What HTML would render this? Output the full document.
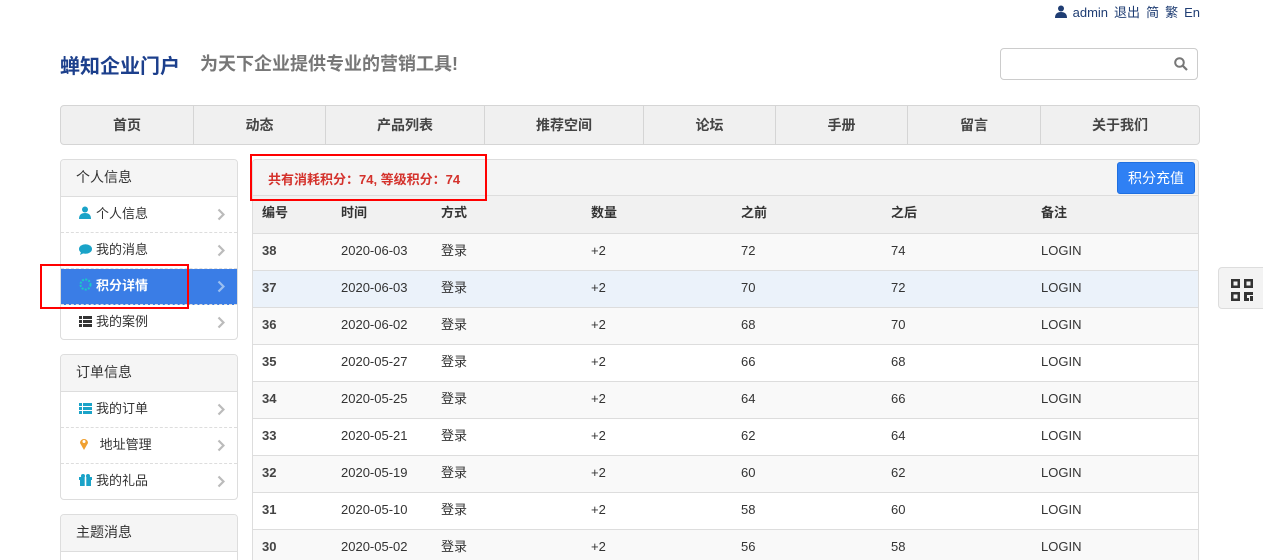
<!DOCTYPE html>
<html><head><meta charset="utf-8"><style>
*{margin:0;padding:0;box-sizing:border-box}
html,body{width:1263px;height:560px;overflow:hidden}
body{background:#fff;font-family:"Liberation Sans","Noto Sans CJK SC",sans-serif;font-size:13px;color:#333;position:relative}
.abs{position:absolute}
.top{right:63px;top:5px;color:#1f3d73;font-size:13px;line-height:16px}
.top span{margin-left:6px}
.logo{left:60px;top:50px;font-size:20px;font-weight:bold;color:#1c3f8c}
.slogan{left:200px;top:50px;font-size:18px;font-weight:bold;color:#777}
.search{left:1000px;top:48px;width:198px;height:32px;border:1px solid #ccc;border-radius:4px}
.nav{left:60px;top:105px;width:1140px;height:40px;background:#f0f0f0;border:1px solid #d5d5d5;border-radius:4px;display:flex}
.nav div{height:38px;line-height:38px;text-align:center;font-weight:bold;font-size:14px;color:#444;border-left:1px solid #d5d5d5}
.nav div:first-child{border-left:none}
.panel{left:60px;width:178px;border:1px solid #ddd;border-radius:4px;overflow:hidden;background:#fff}
.ph{height:37px;line-height:35px;background:#f5f5f5;border-bottom:1px solid #ddd;padding-left:15px;font-size:14px}
.pi{height:36px;line-height:34px;padding-left:18px;border-bottom:1px dashed #ddd;position:relative;font-size:13px}
.pi:last-child{border-bottom:none}
.pi .ar{position:absolute;right:12px;top:11px}
.pi i{display:inline-block;width:13px;margin-right:4px;font-style:normal;vertical-align:-1px}
.act{background:#3a7de6;color:#fff;font-weight:bold}
.main{left:252px;top:159px;width:947px;height:420px;border:1px solid #ddd;border-radius:4px 4px 0 0;overflow:hidden}
.mh{height:36px;background:#f4f4f4;border-bottom:1px solid #ddd;position:relative}
.mh .t{position:absolute;left:15px;top:9px;color:#d4322c;font-weight:bold;font-size:13px}
.btn{position:absolute;right:3px;top:2px;width:78px;height:32px;background:#2f80f4;border:1px solid #1f6fe0;border-radius:3px;color:#fff;font-size:14px;text-align:center;line-height:30px}
table{border-collapse:collapse;width:100%}
td,th{height:37px;border-bottom:1px solid #ddd;text-align:left;padding:0 0 2px 9px;font-size:13px;font-weight:normal;line-height:14px}
tr{height:37px}
th{font-weight:bold;background:#f1f1f1}
td:first-child{font-weight:bold;color:#444}
tr.g td{background:#f9f9f9}
tr.h td{background:#ebf2fa}
.red{border:2px solid #f00}
.qr{left:1218px;top:267px;width:46px;height:42px;background:#f3f3f3;border:1px solid #ddd;border-radius:4px 0 0 4px}
</style></head><body>
<div class="abs top"><svg width="12" height="13" viewBox="0 0 12 13" style="vertical-align:-1px"><circle cx="6" cy="3.5" r="3" fill="#1f3d73"/><path d="M0 13 Q0 7 6 7 Q12 7 12 13Z" fill="#1f3d73"/></svg><span>admin</span><span>退出</span><span>简</span><span>繁</span><span>En</span></div>
<div class="abs logo">蝉知企业门户</div>
<div class="abs slogan">为天下企业提供专业的营销工具!</div>
<div class="abs search"><svg class="abs" style="left:173px;top:8px" width="14" height="14" viewBox="0 0 14 14"><circle cx="5.5" cy="5.5" r="4.3" fill="none" stroke="#777" stroke-width="2"/><path d="M8.7 8.7L13 13" stroke="#777" stroke-width="2.2"/></svg></div>
<div class="abs nav"><div style="width:132px">首页</div><div style="width:132px">动态</div><div style="width:159px">产品列表</div><div style="width:159px">推荐空间</div><div style="width:132px">论坛</div><div style="width:132px">手册</div><div style="width:133px">留言</div><div style="flex:1">关于我们</div></div>

<div class="abs panel" style="top:159px;height:181px">
<div class="ph">个人信息</div>
<div class="pi"><i><svg width="12" height="13"><circle cx="6" cy="3.5" r="3" fill="#1aa3c8"/><path d="M0 13Q0 7 6 7Q12 7 12 13Z" fill="#1aa3c8"/></svg></i>个人信息<svg class="ar" width="8" height="13"><path d="M1.5 1.5L6.5 6.5L1.5 11.5" fill="none" stroke="#bbb" stroke-width="2.2"/></svg></div>
<div class="pi"><i><svg width="13" height="11"><ellipse cx="6.5" cy="5" rx="6.5" ry="4.8" fill="#1aa3c8"/><path d="M2 8L1 11L5 9Z" fill="#1aa3c8"/></svg></i>我的消息<svg class="ar" width="8" height="13"><path d="M1.5 1.5L6.5 6.5L1.5 11.5" fill="none" stroke="#bbb" stroke-width="2.2"/></svg></div>
<div class="pi act"><i><svg width="13" height="13"><circle cx="6.5" cy="6.5" r="5" fill="none" stroke="#1ac8c8" stroke-width="2" stroke-dasharray="2 1.3"/></svg></i>积分详情<svg class="ar" width="8" height="13"><path d="M1.5 1.5L6.5 6.5L1.5 11.5" fill="none" stroke="#9bbff0" stroke-width="2.2"/></svg></div>
<div class="pi"><i><svg width="13" height="11"><g fill="#333"><rect y="0" width="3" height="3"/><rect y="4" width="3" height="3"/><rect y="8" width="3" height="3"/><rect x="4" y="0" width="9" height="3"/><rect x="4" y="4" width="9" height="3"/><rect x="4" y="8" width="9" height="3"/></g></svg></i>我的案例<svg class="ar" width="8" height="13"><path d="M1.5 1.5L6.5 6.5L1.5 11.5" fill="none" stroke="#bbb" stroke-width="2.2"/></svg></div>
</div>
<div class="abs red" style="left:40px;top:264px;width:149px;height:45px"></div>

<div class="abs panel" style="top:354px;height:146px">
<div class="ph">订单信息</div>
<div class="pi"><i><svg width="13" height="11"><g fill="#1aa3c8"><rect y="0" width="3" height="3"/><rect y="4" width="3" height="3"/><rect y="8" width="3" height="3"/><rect x="4" y="0" width="9" height="3"/><rect x="4" y="4" width="9" height="3"/><rect x="4" y="8" width="9" height="3"/></g></svg></i>我的订单<svg class="ar" width="8" height="13"><path d="M1.5 1.5L6.5 6.5L1.5 11.5" fill="none" stroke="#bbb" stroke-width="2.2"/></svg></div>
<div class="pi"><i><svg width="10" height="13"><path d="M5 13L1 6A4 4 0 1 1 9 6Z" fill="#f0a030"/><circle cx="5" cy="4.5" r="1.5" fill="#fff"/></svg></i> 地址管理<svg class="ar" width="8" height="13"><path d="M1.5 1.5L6.5 6.5L1.5 11.5" fill="none" stroke="#bbb" stroke-width="2.2"/></svg></div>
<div class="pi"><i><svg width="13" height="12"><g fill="#1aa3c8"><rect x="0" y="3" width="13" height="3"/><rect x="1" y="6" width="11" height="6"/><circle cx="4" cy="2" r="2"/><circle cx="9" cy="2" r="2"/></g><rect x="5.7" y="3" width="1.6" height="9" fill="#fff"/></svg></i>我的礼品<svg class="ar" width="8" height="13"><path d="M1.5 1.5L6.5 6.5L1.5 11.5" fill="none" stroke="#bbb" stroke-width="2.2"/></svg></div>
</div>
<div class="abs panel" style="top:514px;height:60px">
<div class="ph">主题消息</div>
</div>

<div class="abs main">
<div class="mh"><span class="t">共有消耗积分：74, 等级积分：74</span><div class="btn">积分充值</div></div>
<table>
<tr><th style="width:79px">编号</th><th style="width:100px">时间</th><th style="width:150px">方式</th><th style="width:150px">数量</th><th style="width:150px">之前</th><th style="width:150px">之后</th><th>备注</th></tr>
<tr class="g"><td>38</td><td>2020-06-03</td><td>登录</td><td>+2</td><td>72</td><td>74</td><td>LOGIN</td></tr>
<tr class="h"><td>37</td><td>2020-06-03</td><td>登录</td><td>+2</td><td>70</td><td>72</td><td>LOGIN</td></tr>
<tr class="g"><td>36</td><td>2020-06-02</td><td>登录</td><td>+2</td><td>68</td><td>70</td><td>LOGIN</td></tr>
<tr><td>35</td><td>2020-05-27</td><td>登录</td><td>+2</td><td>66</td><td>68</td><td>LOGIN</td></tr>
<tr class="g"><td>34</td><td>2020-05-25</td><td>登录</td><td>+2</td><td>64</td><td>66</td><td>LOGIN</td></tr>
<tr><td>33</td><td>2020-05-21</td><td>登录</td><td>+2</td><td>62</td><td>64</td><td>LOGIN</td></tr>
<tr class="g"><td>32</td><td>2020-05-19</td><td>登录</td><td>+2</td><td>60</td><td>62</td><td>LOGIN</td></tr>
<tr><td>31</td><td>2020-05-10</td><td>登录</td><td>+2</td><td>58</td><td>60</td><td>LOGIN</td></tr>
<tr class="g"><td>30</td><td>2020-05-02</td><td>登录</td><td>+2</td><td>56</td><td>58</td><td>LOGIN</td></tr>
</table>
</div>
<div class="abs red" style="left:250px;top:154px;width:237px;height:47px"></div>

<div class="abs qr"><svg class="abs" style="left:12px;top:11px" width="22" height="22" viewBox="0 0 22 22" fill="#333"><path d="M0 0h9v9H0ZM2.5 2.5v4h4v-4ZM13 0h9v9h-9ZM15.5 2.5v4h4v-4ZM0 13h9v9H0ZM2.5 15.5v4h4v-4Z" fill-rule="evenodd"/><rect x="13" y="13" width="3" height="9"/><rect x="16" y="13" width="3" height="3"/><rect x="19" y="13" width="3" height="3"/><rect x="19" y="17" width="3" height="5"/><rect x="16" y="19" width="2" height="3"/></svg></div>
</body></html>
